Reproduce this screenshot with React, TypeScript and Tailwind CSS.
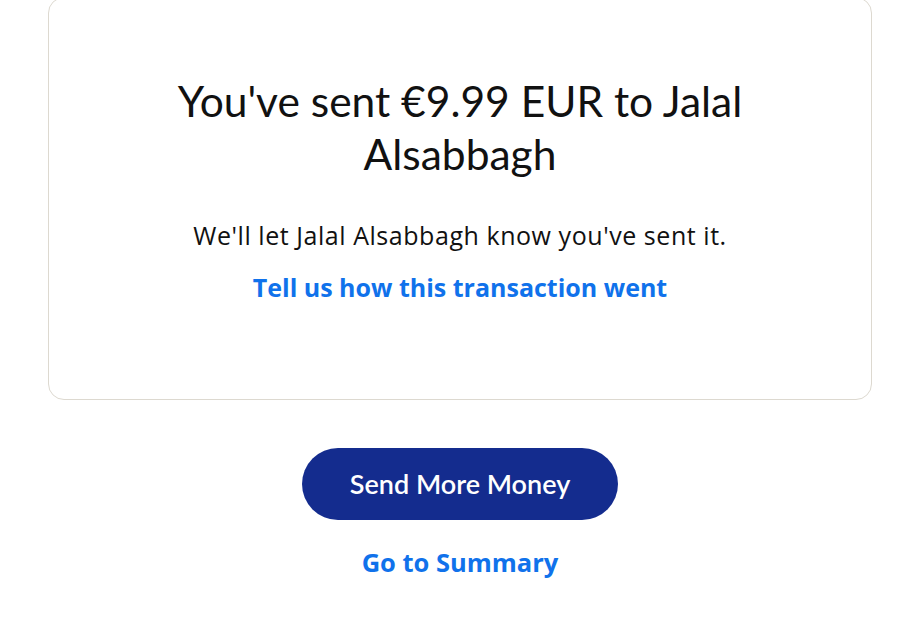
import React from 'react';

const heading = { fontFamily: '"Lato", "Open Sans", sans-serif' };
const body = { fontFamily: '"Open Sans", "Lato", sans-serif' };

export default function App() {
  return (
    <div className="min-h-screen bg-white" style={heading}>
      <div className="flex flex-col items-center ml-12 mr-[30px] -mt-[3px]">
        {/* Confirmation card */}
        <div className="w-full h-[403px] rounded-2xl border border-[#ddd9d0] flex flex-col items-center pt-[76px] px-20 text-center">
          <h1 className="text-[42.5px] leading-[53px] font-normal text-[#111]">
            You've sent €9.99 EUR to Jalal Alsabbagh
          </h1>
          <p className="mt-[39px] text-[25px] leading-[32px] tracking-[0.55px] text-[#111]" style={body}>
            We'll let Jalal Alsabbagh know you've sent it.
          </p>
          <a href="#" className="mt-[20px] text-[25px] leading-[32px] font-bold text-[#1072eb]" style={body}>
            Tell us how this transaction went
          </a>
        </div>

        <button className="mt-[48px] w-[316px] h-[72px] rounded-full bg-[#142c8e] text-white text-[27px] font-semibold">
          Send More Money
        </button>
        <a href="#" className="mt-[26px] text-[25.5px] leading-[32px] font-bold text-[#1072eb]" style={body}>
          Go to Summary
        </a>
      </div>
    </div>
  );
}
